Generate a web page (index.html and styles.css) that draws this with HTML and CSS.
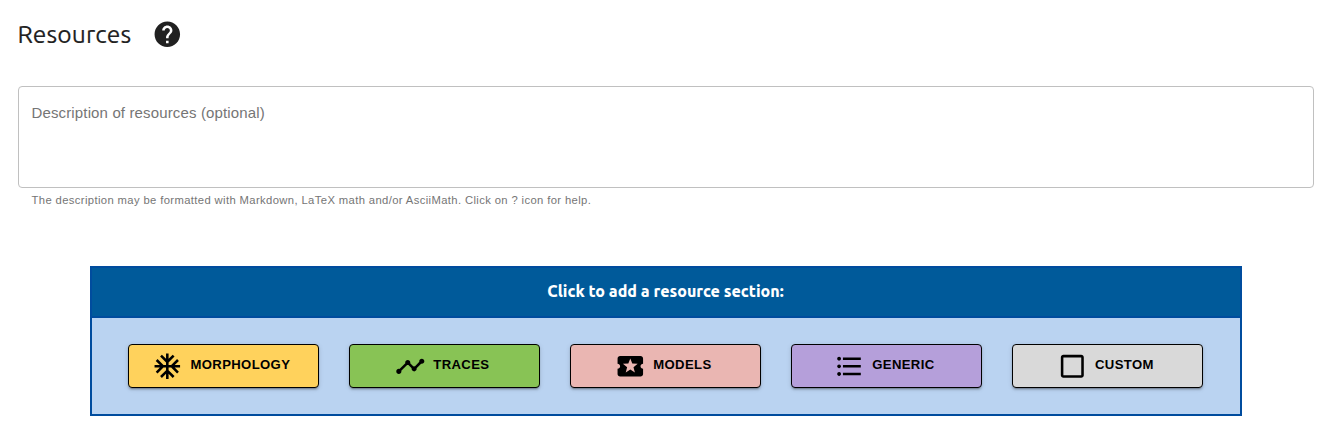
FILE: index.html
```html
<!DOCTYPE html>
<html lang="en">
<head>
<meta charset="utf-8">
<title>Resources</title>
<link rel="stylesheet" href="styles.css">
</head>
<body>
<main class="page">
  <header class="heading">
    <h1 class="title">Resources</h1>
    <svg class="icon help" viewBox="0 0 24 24"><path d="M12 2C6.48 2 2 6.48 2 12s4.48 10 10 10 10-4.48 10-10S17.52 2 12 2zm1 17h-2v-2h2v2zm2.07-7.75l-.9.92C13.45 12.9 13 13.5 13 15h-2v-.5c0-1.1.45-2.1 1.17-2.83l1.24-1.26c.37-.36.59-.86.59-1.41 0-1.1-.9-2-2-2s-2 .9-2 2H8c0-2.21 1.79-4 4-4s4 1.79 4 4c0 .88-.36 1.68-.93 2.25z"/></svg>
  </header>
  <div class="field">Description of resources (optional)</div>
  <p class="helper">The description may be formatted with Markdown, LaTeX math and/or AsciiMath. Click on ? icon for help.</p>
  <section class="panel">
    <h2 class="panel-title"><span class="panel-label">Click to add a resource section:</span></h2>
    <div class="buttons">
      <button class="button morphology"><svg class="icon" viewBox="0 0 24 24"><path d="M22 11h-4.17l3.24-3.24-1.41-1.42L15 11h-2V9l4.66-4.66-1.42-1.41L13 6.17V2h-2v4.17L7.76 2.93 6.34 4.34 11 9v2H9L4.34 6.34 2.93 7.76 6.17 11H2v2h4.17l-3.24 3.24 1.41 1.42L9 13h2v2l-4.66 4.66 1.42 1.41L11 17.83V22h2v-4.17l3.24 3.24 1.42-1.41L13 15v-2h2l4.66 4.66 1.41-1.42L17.83 13H22z"/></svg><span class="label">MORPHOLOGY</span></button>
      <button class="button traces"><svg class="icon" viewBox="0 0 24 24"><path d="M23 8c0 1.1-.9 2-2 2-.18 0-.35-.02-.51-.07l-3.56 3.55c.05.16.07.34.07.52 0 1.1-.9 2-2 2s-2-.9-2-2c0-.18.02-.36.07-.52l-2.55-2.55c-.16.05-.34.07-.52.07s-.36-.02-.52-.07l-4.55 4.56c.05.16.07.33.07.51 0 1.1-.9 2-2 2s-2-.9-2-2 .9-2 2-2c.18 0 .35.02.51.07l4.56-4.55C8.02 9.36 8 9.18 8 9c0-1.1.9-2 2-2s2 .9 2 2c0 .18-.02.36-.07.52l2.55 2.55c.16-.05.34-.07.52-.07s.36.02.52.07l3.55-3.56C19.02 8.35 19 8.18 19 8c0-1.1.9-2 2-2s2 .9 2 2z"/></svg><span class="label">TRACES</span></button>
      <button class="button models"><svg class="icon" viewBox="0 0 24 24"><path d="M20 12c0-1.1.9-2 2-2V6c0-1.1-.9-2-2-2H4c-1.1 0-1.99.9-1.99 2v4c1.1 0 1.99.9 1.99 2s-.89 2-2 2v4c0 1.1.9 2 2 2h16c1.1 0 2-.9 2-2v-4c-1.1 0-2-.9-2-2zm-4.42 4.8L12 14.5l-3.58 2.3 1.08-4.12-3.29-2.69 4.24-.25L12 5.8l1.54 3.95 4.24.25-3.29 2.69 1.09 4.11z"/></svg><span class="label">MODELS</span></button>
      <button class="button generic"><svg class="icon" viewBox="0 0 24 24"><path d="M4 10.5c-.83 0-1.5.67-1.5 1.5s.67 1.5 1.5 1.5 1.5-.67 1.5-1.5-.67-1.5-1.5-1.5zm0-6c-.83 0-1.5.67-1.5 1.5S3.17 7.5 4 7.5 5.5 6.83 5.5 6 4.83 4.5 4 4.5zm0 12c-.83 0-1.5.68-1.5 1.5s.68 1.5 1.5 1.5 1.5-.68 1.5-1.5-.67-1.5-1.5-1.5zM7 19h14v-2H7v2zm0-6h14v-2H7v2zm0-8v2h14V5H7z"/></svg><span class="label">GENERIC</span></button>
      <button class="button custom"><svg class="icon" viewBox="0 0 24 24"><path d="M19 5v14H5V5h14m0-2H5c-1.1 0-2 .9-2 2v14c0 1.1.9 2 2 2h14c1.1 0 2-.9 2-2V5c0-1.1-.9-2-2-2z"/></svg><span class="label">CUSTOM</span></button>
    </div>
  </section>
</main>
</body>
</html>
```
FILE: styles.css
```css
* { box-sizing: border-box; }
body {
  margin: 0;
  background: #fff;
  color: #212121;
  font-family: "Liberation Sans", Arial, sans-serif;
}
.page { padding: 16px 16px 0 18px; }
.heading { display: flex; align-items: center; gap: 20px; height: 36px; margin-left: -0.5px; }
.title {
  margin: 0;
  width: 114px;
  white-space: nowrap;
  font: 450 24.6px/36px Ubuntu, "Noto Sans", sans-serif;
  letter-spacing: 0.1px;
  -webkit-text-stroke: 0.15px currentColor;
}
.icon { display: block; flex: none; width: 30.625px; height: 30.625px; fill: currentColor; }
.field {
  height: 102px;
  margin-top: 34px;
  padding: 17px 12.5px;
  border: 1px solid #c0c0c0;
  border-radius: 4px;
  color: #757575;
  font-size: 15px;
  line-height: 18px;
  letter-spacing: 0.00938em;
}
.helper {
  margin: 3px 13.5px 0;
  color: #757575;
  font-size: 11.25px;
  line-height: 19px;
  letter-spacing: 0.03333em;
}
.panel {
  width: 1152px;
  margin: 56px 0 0 72px;
  border: 2px solid #004c9e;
  background: #bad3f1;
}
.panel-title {
  display: flex;
  align-items: center;
  justify-content: center;
  height: 50px;
  margin: 0;
  padding: 0 1px 2px 0;
  border-bottom: 2px solid #004c9e;
  background: #005a9a;
  color: #fff;
  font: 800 16px/24px Ubuntu, "Noto Sans", sans-serif;
}
.buttons { display: flex; gap: 30px; height: 96px; padding: 26px 36px; }
.button {
  display: flex;
  align-items: center;
  justify-content: center;
  gap: 7.8px;
  width: 191px;
  height: 44px;
  padding: 0 4.7px 0 0;
  border: 1px solid #000;
  border-radius: 4px;
  box-shadow: 0 3px 1px -2px rgba(0,0,0,.2), 0 2px 2px rgba(0,0,0,.14), 0 1px 5px rgba(0,0,0,.12);
  color: #000;
  font: 700 13.125px/23px "Liberation Sans", Arial, sans-serif;
  letter-spacing: 0.02857em;
}
.label { padding-bottom: 3px; }
.morphology { background: #ffd25c; }
.traces { background: #88c355; }
.models { background: #eab6b2; }
.generic { background: #b59fda; }
.custom { background: #d9d9d9; }
```
